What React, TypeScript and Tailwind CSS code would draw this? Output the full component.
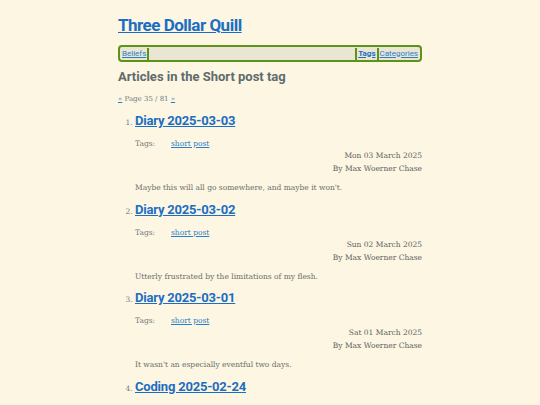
import React from 'react'

type Post = {
  title: string
  date: string
  summary: string
}

const posts: Post[] = [
  { title: 'Diary 2025-03-03', date: 'Mon 03 March 2025', summary: "Maybe this will all go somewhere, and maybe it won't." },
  { title: 'Diary 2025-03-02', date: 'Sun 02 March 2025', summary: 'Utterly frustrated by the limitations of my flesh.' },
  { title: 'Diary 2025-03-01', date: 'Sat 01 March 2025', summary: "It wasn't an especially eventful two days." },
  { title: 'Coding 2025-02-24', date: 'Mon 24 February 2025', summary: '' },
]

const sans = "font-['Roboto','Noto_Sans',sans-serif]"
const serif = "font-['DejaVu_Serif','Liberation_Serif',serif]"

function Separator() {
  return <span className="mx-[1px] inline-block h-[12px] w-[2px] bg-[#5b9419]" />
}

function PostItem({ post }: { post: Post }) {
  return (
    <li className="pb-[8.5px]">
      <h3 className={`${sans} text-[13px] font-bold leading-[16px] tracking-[-0.2px]`}>
        <a href="#" className="text-[#1b6ec2] underline">{post.title}</a>
      </h3>
      <div className="mt-[9px] flex leading-[11px] text-[#6f7a7c]">
        <span className="w-[36px]">Tags:</span>
        <a href="#" className="text-[#2a7fc9] underline">short post</a>
      </div>
      <div className="text-right leading-[13px] text-[#5c5f60]">
        <div>{post.date}</div>
        <div>By Max Woerner Chase</div>
      </div>
      <p className="mt-[7px] leading-[11px] text-[#6a6d6e]">{post.summary}</p>
    </li>
  )
}

export default function App() {
  return (
    <div className={`min-h-screen bg-[#fdf6e3] ${serif}`}>
      <div className="mx-auto w-[304px] pt-[14px]">
        <h1 className={`${sans} text-[17px] font-bold leading-[22px] tracking-[-0.5px]`}>
          <a href="#" className="text-[#1b6ec2] underline">Three Dollar Quill</a>
        </h1>

        <nav className={`${sans} mt-[9px] flex h-[17px] items-center rounded-[4px] border-2 border-[#5b9419] bg-[#ebe5d4] px-[2px] text-[8px]`}>
          <a href="#" className="text-[#2a7fc9] underline">Beliefs</a>
          <Separator />
          <span className="flex-1" />
          <Separator />
          <a href="#" className="font-bold text-[#1b6ec2] underline">Tags</a>
          <Separator />
          <a href="#" className="text-[#2a7fc9] underline">Categories</a>
        </nav>

        <h2 className={`${sans} mt-[7px] text-[13px] font-bold leading-[16px] text-[#5f6b6d]`}>
          Articles in the Short post tag
        </h2>

        <p className="mt-[9px] text-[7px] leading-[10px] text-[#6f7a7c]">
          <a href="#" className="text-[#2a7fc9] underline">«</a> Page 35 / 81{' '}
          <a href="#" className="text-[#2a7fc9] underline">»</a>
        </p>

        <ol className="mt-[9px] list-decimal pl-[17px] text-[7.5px] marker:text-[#6f7a7c]">
          {posts.map((p) => (
            <PostItem key={p.title} post={p} />
          ))}
        </ol>
      </div>
    </div>
  )
}
